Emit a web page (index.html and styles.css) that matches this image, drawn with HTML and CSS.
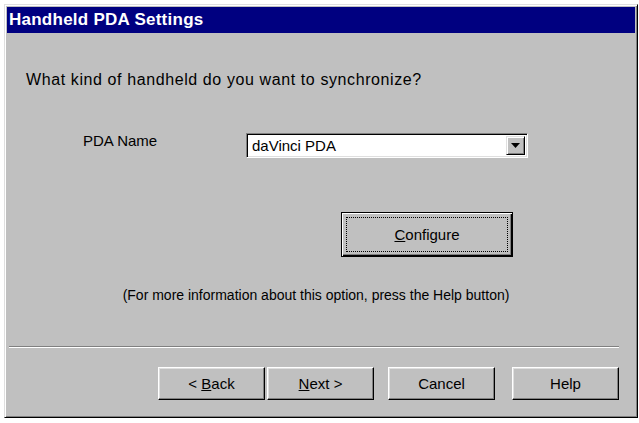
FILE: index.html
```html
<!DOCTYPE html>
<html>
<head>
<meta charset="utf-8">
<link rel="stylesheet" href="styles.css">
</head>
<body>
<div class="window">
  <div class="titlebar">Handheld PDA Settings</div>
  <div class="content">
    <p class="question">What kind of handheld do you want to synchronize?</p>
    <div class="name-row">
      <span class="label">PDA Name</span>
      <div class="combo">
        <span class="combo-text">daVinci PDA</span>
        <span class="combo-btn">
          <svg width="9" height="5" viewBox="0 0 9 5"><path d="M0 0h9L4.5 5z" fill="#000"/></svg>
        </span>
      </div>
    </div>
    <div class="configure-row">
      <button class="btn default"><span class="focus"><u>C</u>onfigure</span></button>
    </div>
    <p class="info">(For more information about this option, press the Help button)</p>
    <div class="separator"></div>
    <div class="buttons">
      <button class="btn">&lt; <u>B</u>ack</button>
      <button class="btn"><u>N</u>ext &gt;</button>
      <button class="btn gap">Cancel</button>
      <button class="btn gap2">Help</button>
    </div>
  </div>
</div>
</body>
</html>
```
FILE: styles.css
```css
html, body {
  margin: 0;
  padding: 0;
  background: #ffffff;
}
body {
  padding: 4px 1px 5px 4px;
  font-family: "Liberation Sans", Arial, sans-serif;
}
.window {
  box-sizing: border-box;
  width: 634px;
  height: 414px;
  background: #c0c0c0;
  border-top: 1px solid #dfdfdf;
  border-left: 1px solid #dfdfdf;
  border-right: 1px solid #000;
  border-bottom: 1px solid #000;
  box-shadow: inset 1px 1px 0 #fff, inset -1px -1px 0 #808080;
  padding: 2px;
  display: flex;
  flex-direction: column;
}
.titlebar {
  height: 26px;
  background: #000080;
  color: #fff;
  font-weight: bold;
  font-size: 17px;
  letter-spacing: 0.25px;
  line-height: 26px;
  padding-left: 2px;
}
.content {
  flex: 1;
  display: flex;
  flex-direction: column;
  font-size: 14px;
  color: #000;
}
.question {
  margin: 39px 0 0 19px;
  line-height: 16px;
  font-size: 16px;
  letter-spacing: 0.6px;
}
.name-row {
  display: flex;
  align-items: center;
  margin-top: 45px;
}
.label {
  margin-left: 76px;
  width: 163px;
  position: relative;
  top: -5px;
  font-size: 15px;
}
.combo {
  box-sizing: border-box;
  width: 282px;
  height: 25px;
  background: #fff;
  border-top: 1px solid #808080;
  border-left: 1px solid #808080;
  border-right: 1px solid #fff;
  border-bottom: 1px solid #fff;
  box-shadow: inset 1px 1px 0 #000, inset -1px -1px 0 #dfdfdf;
  display: flex;
  align-items: center;
  padding: 2px;
}
.combo-text {
  flex: 1;
  padding-left: 3px;
  font-size: 15px;
}
.combo-btn {
  box-sizing: border-box;
  width: 19px;
  height: 19px;
  background: #c0c0c0;
  border-top: 1px solid #dfdfdf;
  border-left: 1px solid #dfdfdf;
  border-right: 1px solid #000;
  border-bottom: 1px solid #000;
  box-shadow: inset 1px 1px 0 #fff, inset -1px -1px 0 #808080;
  display: flex;
  align-items: center;
  justify-content: center;
}
.configure-row {
  display: flex;
  margin-top: 54px;
  padding-left: 334px;
}
.btn {
  box-sizing: border-box;
  font-family: "Liberation Sans", Arial, sans-serif;
  font-size: 15px;
  color: #000;
  background: #c0c0c0;
  border-top: 1px solid #fff;
  border-left: 1px solid #fff;
  border-right: 1px solid #000;
  border-bottom: 1px solid #000;
  box-shadow: inset -1px -1px 0 #808080, inset 1px 1px 0 #dfdfdf;
  padding: 0;
  width: 107px;
  height: 33px;
  margin: 0;
}
.btn.default {
  width: 172px;
  height: 45px;
  border: 1px solid #000;
  box-shadow: inset 1px 1px 0 #fff, inset -1px -1px 0 #000, inset -2px -2px 0 #808080;
  padding: 4px;
  display: flex;
}
.focus {
  flex: 1;
  border: 1px dotted #000;
  display: flex;
  align-items: center;
  justify-content: center;
}
.info {
  margin: 30px 0 0 0;
  text-align: center;
  line-height: 16px;
  padding-right: 10px;
}
.separator {
  margin: 43px 0 0 2px;
  width: 610px;
  border-top: 1px solid #808080;
  border-bottom: 1px solid #fff;
}
.buttons {
  display: flex;
  margin-top: 19px;
  padding-left: 151px;
  gap: 2px;
}
.btn.gap {
  margin-left: 12px;
}
.btn.gap2 {
  margin-left: 15px;
}
```
